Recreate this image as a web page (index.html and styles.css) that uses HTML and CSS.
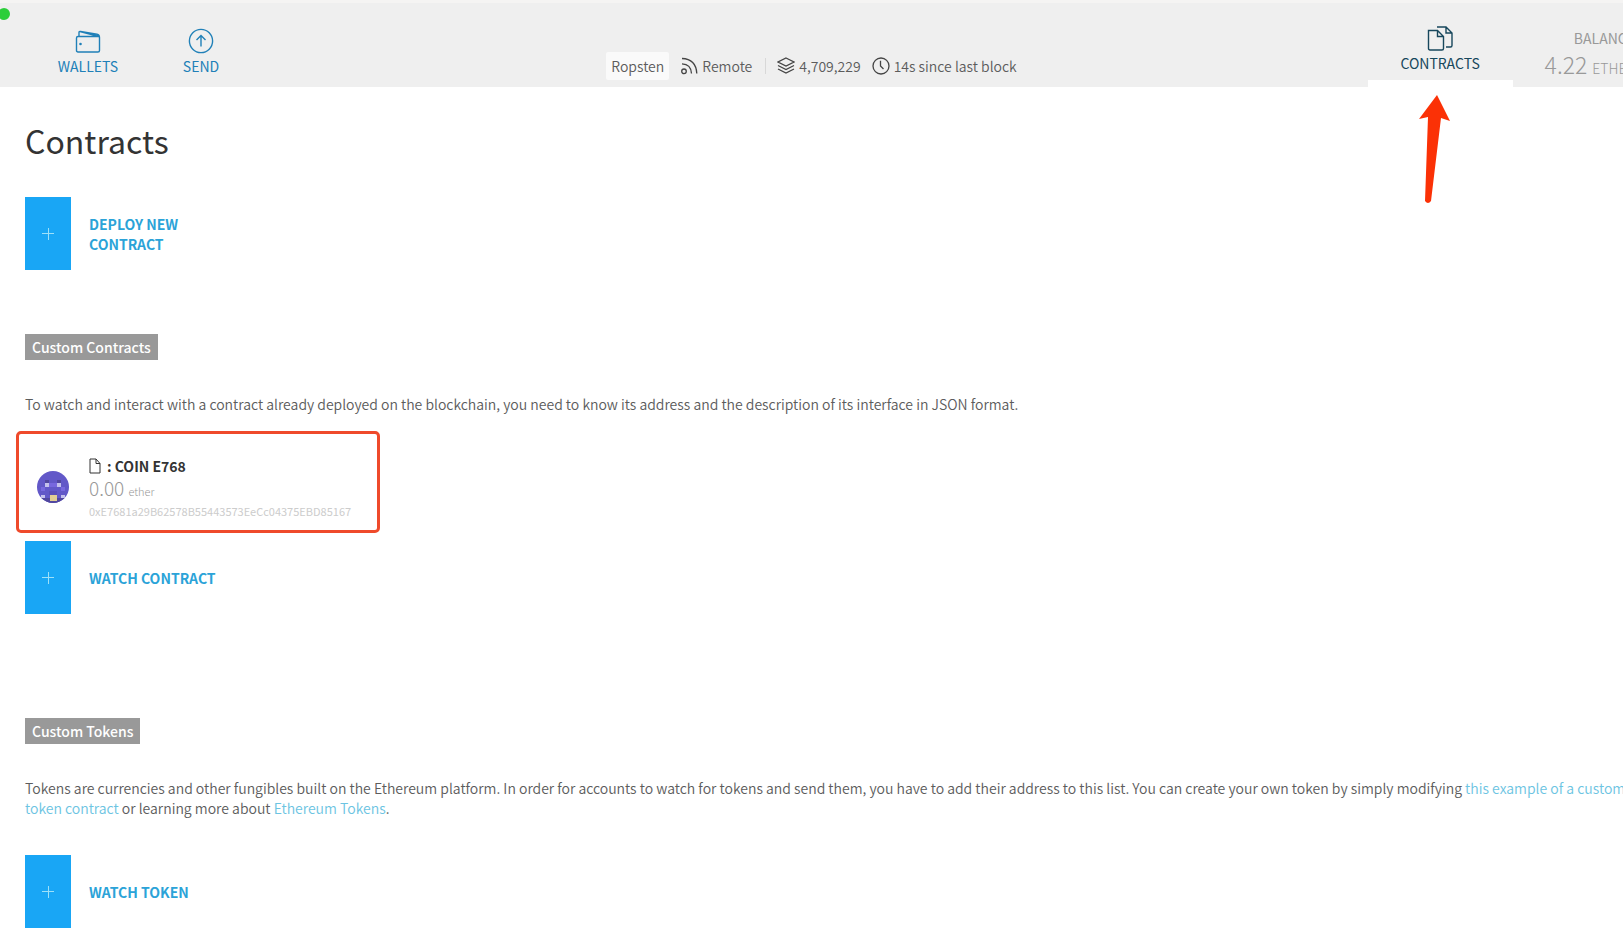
FILE: index.html
```html
<!DOCTYPE html>
<html lang="en">
<head>
<meta charset="utf-8">
<title>Contracts</title>
<link rel="stylesheet" href="styles.css">
</head>
<body>
<span class="window-dot"></span>
<header class="topbar">
  <nav class="nav">
    <a class="nav-item" href="#wallets">
      <svg class="nav-icon" viewBox="0 0 26 26"><path d="M3 8.500H23.500Q24.500 8.500 24.500 9.500V22.500Q24.500 24 23 24H3Q1.500 24 1.500 22.500V10Q1.500 8.500 3 8.500ZM4 8.500V4.500Q4 3.200 5.500 3.400L22 6.200Q24.500 6.800 24.500 9.500M5 3.500L24 8.500"/><circle class="solid" cx="5.500" cy="16" r="1.300"/></svg>
      WALLETS
    </a>
    <a class="nav-item" href="#send">
      <svg class="nav-icon" viewBox="0 0 26 26"><circle cx="13" cy="13" r="11.600"/><path d="M13 18.500V7.500M8.500 12L13 7.500L17.500 12"/></svg>
      SEND
    </a>
  </nav>
  <div class="status">
    <button class="network" type="button">Ropsten</button>
    <span class="stat">
      <svg class="stat-icon" viewBox="0 0 18 18"><circle cx="4" cy="14.300" r="2.300"/><path d="M2 6.800Q11 7 11.500 16.500M2 1.500Q16 2 16.800 16.500"/></svg>
      Remote
    </span>
    <span class="divider"></span>
    <span class="stat">
      <svg class="stat-icon" viewBox="0 0 18 18"><path d="M9 1L17 5L9 9L1 5ZM1 8.500L9 12.500L17 8.500M1 12L9 16L17 12M1 5V5.500M17 5V5.500"/></svg>
      4,709,229
    </span>
    <span class="stat last">
      <svg class="stat-icon" viewBox="0 0 18 18"><circle cx="9" cy="9" r="8"/><path d="M8.500 3.800V9L11.500 12"/></svg>
      14s since last block
    </span>
  </div>
  <div class="side">
    <a class="nav-item active" href="#contracts" aria-current="page">
      <svg class="nav-icon" viewBox="0 0 26 26"><path d="M1.500 5.500H10.500L16.500 11.500V23.500Q16.500 25 15 25H3Q1.500 25 1.500 23.500ZM10.500 5.500V11.500H16.500M10 2H19L25 8V20.500Q25 22 23.500 22H19M19 2V8H25"/></svg>
      CONTRACTS
    </a>
    <div class="balance">
      <span class="balance-title">BALANCE</span>
      <span class="balance-value">4.22 <small>ETHER</small></span>
    </div>
  </div>
</header>

<main class="content">
  <h1>Contracts</h1>
  <button class="add" type="button"><span class="plus"></span><span class="add-label">DEPLOY NEW CONTRACT</span></button>

  <h2>Custom Contracts</h2>
  <p>To watch and interact with a contract already deployed on the blockchain, you need to know its address and the description of its interface in JSON format.</p>
  <a class="card" href="#coin">
    <svg class="avatar" viewBox="0 0 32 32">
      <defs><clipPath id="face"><circle cx="16" cy="16" r="16"/></clipPath></defs>
      <g clip-path="url(#face)">
        <rect width="32" height="32" fill="#6258c8"/>
        <path fill="#51479f" d="M8 9h4v3H8zM20 9h4v3h-4zM0 27h32v5H0z"/>
        <path fill="#7768de" d="M12 12h8v4h-8zM4 16h4v4H4zM24 16h4v4h-4z"/>
        <path fill="#5a4fba" d="M12 20h8v4h-8z"/>
        <path fill="#c4c1ec" d="M8 12h4v4H8zM20 12h4v4h-4zM4 24h4v3H4zM24 24h4v3h-4z"/>
        <path fill="#e2cf94" d="M13 24h7v6h-7z"/>
      </g>
    </svg>
    <span class="card-text">
      <span class="card-name"><svg class="file-icon" viewBox="0 0 12 16"><path d="M1 1H7L11 5.500V15H1ZM7 1V5.500H11"/></svg>: COIN E768</span>
      <span class="card-balance">0.00 <small>ether</small></span>
      <span class="card-address">0xE7681a29B62578B55443573EeCc04375EBD85167</span>
    </span>
  </a>
  <button class="add watch" type="button"><span class="plus"></span><span class="add-label">WATCH CONTRACT</span></button>

  <h2 class="tokens">Custom Tokens</h2>
  <p>Tokens are currencies and other fungibles built on the Ethereum platform. In order for accounts to watch for tokens and send them, you have to add their address to this list. You can create your own token by simply modifying <a href="#example">this example of a custom token contract</a> or learning more about <a href="#tokens">Ethereum Tokens</a>.</p>
  <button class="add token" type="button"><span class="plus"></span><span class="add-label">WATCH TOKEN</span></button>
</main>
<svg class="arrow" viewBox="0 0 32 110"><path fill="#fb3106" d="M18 0L31 26L22 23L12 106Q9 110 6 106L9 22L0 24Z"/></svg>
</body>
</html>
```
FILE: styles.css
```css
* { box-sizing: border-box; }
body {
  margin: 0;
  position: relative;
  overflow-x: hidden;
  background: #fff;
  color: #5c5c5c;
  font: 350 14px/20px "Noto Sans CJK SC", "Noto Sans", sans-serif;
}
a { color: #6cc4e2; text-decoration: none; }
button { border: 0; padding: 0; background: none; font: inherit; color: inherit; text-align: left; cursor: pointer; }
svg { fill: none; stroke: currentColor; stroke-width: 1.4; flex: none; }
.solid { fill: currentColor; stroke: none; }
.window-dot {
  position: absolute;
  left: -2px;
  top: 8px;
  width: 12px;
  height: 12px;
  border-radius: 50%;
  background: #2bce3a;
}
.topbar {
  display: grid;
  grid-template-columns: minmax(0, 1fr) auto minmax(0, 1fr);
  height: 87px;
  background: #efefef;
  border-top: 3px solid #f5f4f3;
}
.nav { display: flex; gap: 17px; padding: 25px 0 0 40px; }
.nav-item {
  display: flex;
  flex-direction: column;
  align-items: center;
  gap: 2px;
  width: 96px;
  color: #2080b8;
  font-weight: 400;
}
.nav-icon { width: 26px; height: 26px; }
.status { display: flex; align-items: center; height: 28px; margin-top: 49px; }
.network { height: 28px; padding: 0 5px; background: #fafafa; border-radius: 2px; }
.stat { display: flex; align-items: center; gap: 4px; margin-left: 11px; }
.stat-icon { width: 18px; height: 18px; stroke-width: 1.3; color: #444; }
.divider { width: 1px; height: 16px; margin-left: 13px; background: #d8d8d8; }
.side { display: flex; justify-content: flex-end; gap: 32px; margin-right: -12px; }
.active {
  width: 145px;
  height: 84px;
  padding-top: 22px;
  border-bottom: 7px solid #fff;
  color: #17475c;
}
.balance { display: flex; flex-direction: column; align-items: flex-end; gap: 4px; padding-top: 25px; color: #999; white-space: nowrap; }
.balance-title { font-weight: 400; }
.balance-value { font-size: 23px; line-height: 24px; font-weight: 300; }
.balance-value small { font-size: 14px; }
.content { padding: 33px 0 10px 25px; margin-right: -20px; }
h1 { margin: 0; font-size: 32px; line-height: 40px; font-weight: 400; color: #333; }
.add { display: flex; align-items: center; gap: 18px; margin-top: 37px; color: #2ba3d8; font-weight: 700; }
.add-label { width: 120px; }
.watch .add-label, .token .add-label { width: auto; }
.plus {
  width: 46px;
  height: 73px;
  background:
    linear-gradient(#9ee0f8, #9ee0f8) center / 12px 1px no-repeat,
    linear-gradient(#9ee0f8, #9ee0f8) center / 1px 12px no-repeat,
    #19a6f5;
}
h2 {
  width: fit-content;
  margin: 64px 0 0;
  padding: 3px 7px;
  background: #999;
  color: #fff;
  font-size: 14px;
  font-weight: 500;
}
p { margin: 34px 0 0; }
.card {
  display: flex;
  align-items: center;
  gap: 20px;
  width: 364px;
  height: 102px;
  margin: 17px 0 0 -9px;
  padding: 10px 17px 0 18px;
  border: 3px solid #ef4a2b;
  border-radius: 5px;
  color: #999;
}
.avatar { width: 32px; height: 32px; stroke: none; }
.card-text { display: flex; flex-direction: column; white-space: nowrap; }
.card-name { display: flex; align-items: center; gap: 6px; color: #333; font-weight: 700; }
.file-icon { width: 12px; height: 16px; stroke-width: 1; }
.card-balance { font-size: 19px; line-height: 24px; font-weight: 300; }
.card-balance small { font-size: 11px; }
.card-address { font-size: 11px; line-height: 16px; font-weight: 400; color: #ccc; }
.watch { margin-top: 8px; }
.tokens { margin-top: 104px; }
.token { margin-top: 37px; }
.arrow { position: absolute; left: 1419px; top: 95px; width: 32px; height: 110px; stroke: none; }
```
